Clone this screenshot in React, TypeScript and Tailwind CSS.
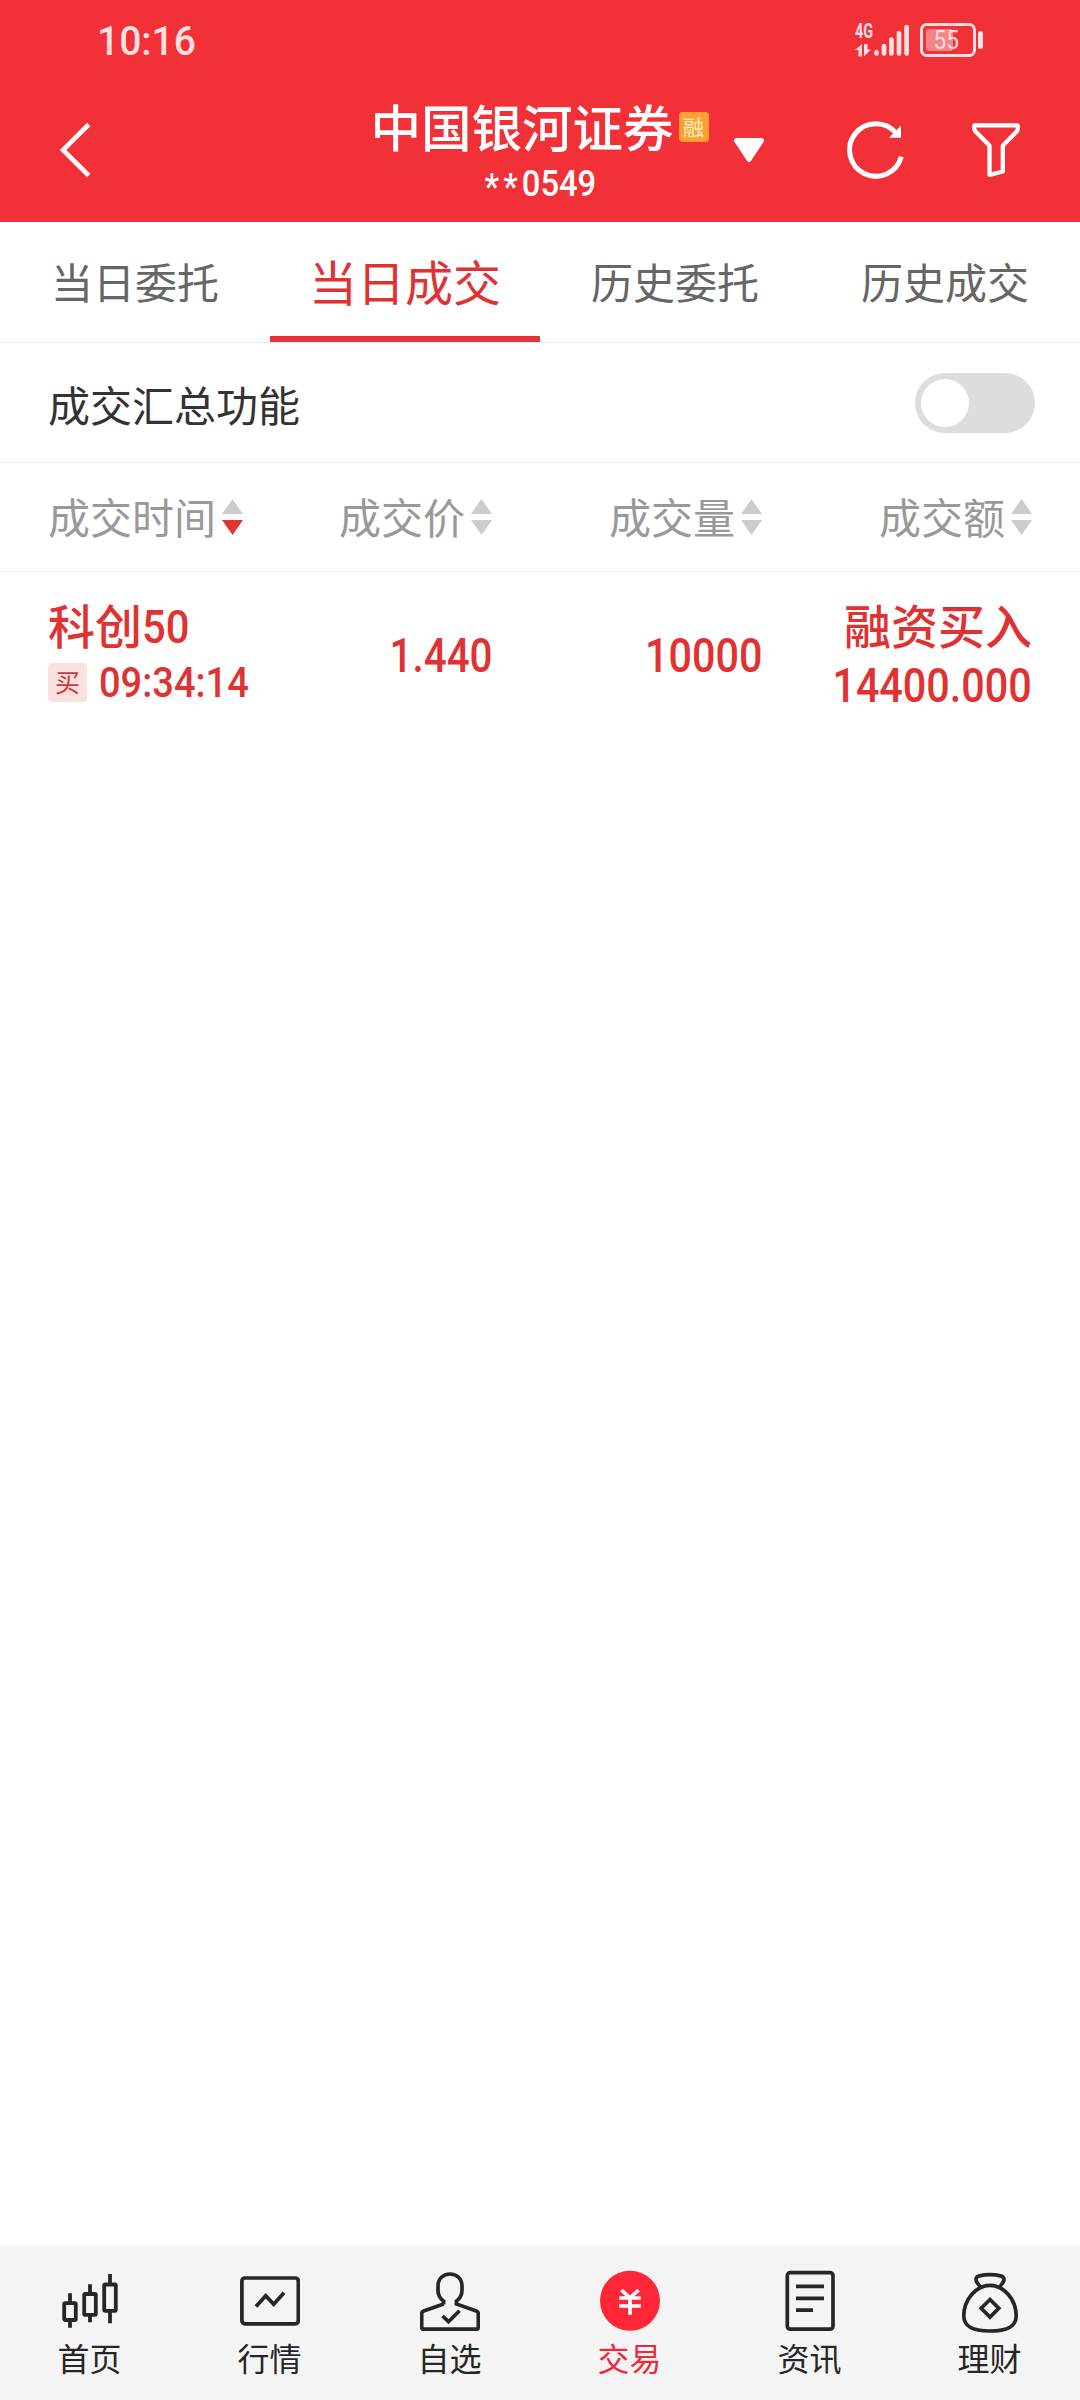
import { useState } from 'react';

const tabs = ['当日委托', '当日成交', '历史委托', '历史成交'];

function StatusBar() {
  return (
    <div className="h-20 flex items-center justify-between pl-[97px] pr-[97px] text-[#ffdfe0]">
      <div className="font-[Roboto] font-medium text-[41px] leading-none origin-left scale-x-[.95] pt-[3px]">10:16</div>
      <div className="flex items-center">
        <div className="flex items-end h-[34px]">
          <div className="w-[19px] h-[34px] flex flex-col">
            <div className="font-[Roboto] font-bold text-[20px] leading-[17px] origin-left scale-x-[.72]">4G</div>
            <svg width="17" height="13" viewBox="0 0 17 13" className="mt-[4px]" fill="currentColor">
              <path d="M7 0v12.500H3.500V6H0z" />
              <path d="M9 0h3.500v5.500H16L9 12.500z" />
            </svg>
          </div>
          <svg width="36" height="34" viewBox="0 0 36 34" stroke="currentColor" strokeWidth="4.700" strokeLinecap="round">
            <path d="M2.500 29.300v1.200M10 23v7.500M17.400 16.500v14M25 10v20.500M32.600 4v26.500" />
          </svg>
        </div>
        <div className="flex items-center ml-[10px]">
          <div className="relative w-[56px] h-[34px] border-[3px] border-[#ffdfe0] rounded-[7px] flex items-center justify-center">
            <div className="absolute left-[3px] top-[3px] w-[27px] h-[22px] rounded-[3px] bg-white/40" />
            <span className="relative font-[Roboto] text-[25px] leading-none origin-center scale-x-[.9] pr-[3px]">55</span>
          </div>
          <div className="w-[5px] h-[18px] rounded-full bg-[#ffdfe0] ml-[2px]" />
        </div>
      </div>
    </div>
  );
}

function Header() {
  return (
    <div className="h-[142px] grid grid-cols-[340px_400px_340px] text-white">
      <svg width="120" height="142" viewBox="0 80 120 142" fill="none" stroke="currentColor" strokeWidth="4.600">
        <path d="M88.700 124.500L63 150l25.700 25.500" />
      </svg>
      <div className="flex flex-col items-center">
        <div className="flex items-center h-[94px] pr-px">
          <div className="text-[50.500px] leading-none font-medium pb-[4px]">中国银河证券</div>
          <div className="w-[30px] h-[30px] ml-[5px] rounded-[4px] bg-[#ffa032] text-[#fff3c4] text-[21px] leading-none flex items-center justify-center">
            <span className="pb-[2px]">融</span>
          </div>
        </div>
        <div className="flex -mt-[8px] font-[Roboto] font-medium text-[36px] leading-none scale-x-[.91]">
          <span className="pt-[3px] tracking-[4.500px]">**</span>
          <span>0549</span>
        </div>
      </div>
      <svg width="340" height="142" viewBox="740 80 340 142" fill="none" stroke="currentColor" className="overflow-visible">
        <path d="M736.500 140.500h25L749 159.500z" fill="currentColor" strokeWidth="5" strokeLinejoin="round" />
        <path d="M901.300 156.700A26.300 26.300 0 1 1 896 133" strokeWidth="5" />
        <path d="M889 137.700h12V125.500z" fill="currentColor" stroke="none" />
        <path
          d="M975 125.300h42a.8.8 0 0 1 .8.8v2.500c0 1.200-.5 2.300-1.300 3.100l-13.700 13.800v26l-13.300 3.400v-29.300l-13.700-13.900c-1-1-1.600-2.200-1.600-3.500v-2.100a.8.8 0 0 1 .8-.8z"
          strokeWidth="4.300"
          strokeLinejoin="round"
        />
      </svg>
    </div>
  );
}

function SortArrows({ down = false }: { down?: boolean }) {
  return (
    <svg width="21" height="36" viewBox="0 0 21 36" className="ml-[6px]">
      <path d="M10.500 0L21 15H0z" fill="#ccc" />
      <path d="M0 21h21L10.500 36z" fill={down ? '#e63232' : '#ccc'} />
    </svg>
  );
}

const navItems = [
  {
    label: '首页',
    icon: (
      <g strokeWidth="3.800">
        <rect x="4.200" y="33.200" width="11.600" height="16.800" rx="1" />
        <rect x="24.200" y="24" width="11.600" height="20.800" rx="1" />
        <rect x="44.200" y="14.500" width="11.600" height="26.300" rx="1" />
        <path d="M10 23.300V33M10 50v7.800M30 14.300V24M30 45v7.300M50 4v10M50 41v12.300" />
      </g>
    ),
  },
  {
    label: '行情',
    icon: (
      <>
        <rect x="1.900" y="8" width="56.400" height="45.800" rx="3" />
        <path d="M16 36.500l9.700-10.800 8 8.600L44 22.700" />
      </>
    ),
  },
  {
    label: '自选',
    icon: (
      <>
        <path d="M23.600 34.500v-3.300C19.700 28.200 18 25 18 20.500V16C18 8.800 23.200 4 30 4s12 4.800 12 12v4.500c0 4.500-1.700 7.700-5.600 10.700v2.700L56.300 41c1.200.5 2 1.500 2 2.700v13c0 1.500-1 2.500-2.500 2.500H4.200c-1.500 0-2.500-1-2.500-2.500v-13c0-1.200.8-2.200 2-2.700l19.900-7.100" />
        <path d="M22.500 46l6 5.700 11-11" />
      </>
    ),
  },
  {
    label: '交易',
    icon: (
      <>
        <circle cx="30" cy="30.700" r="30" fill="#ff2638" stroke="none" />
        <path d="M21.500 20l8.500 8 8.500-8M30 28v16.700M19.200 28h21.600M19.200 36h21.600" stroke="#fff" />
      </>
    ),
  },
  {
    label: '资讯',
    icon: (
      <>
        <rect x="7.300" y="2.700" width="45.700" height="56.500" rx="3" />
        <path d="M16 16.300h28M16 28.300h28M16 40.200h17" />
      </>
    ),
  },
  {
    label: '理财',
    icon: (
      <>
        <path d="M30 15.300c-14 0-26.200 14.500-26.200 30.500C3.800 56.500 12 61 30 61s26.200-4.500 26.200-15.200c0-16-12.200-30.500-26.200-30.500z" />
        <path d="M20.500 17.500c-1.200-2.300-3.300-4.300-4.200-6.500-.8-2.300 0-4.300 2.300-4.900 7-1.700 15.800-1.700 22.800 0 2.300.6 3.100 2.600 2.300 4.900-.9 2.200-3 4.200-4.200 6.500" />
        <path d="M30 29.500l8.800 8.800-8.800 8.800-8.800-8.800z" />
      </>
    ),
  },
];

function App() {
  const [activeTab, setActiveTab] = useState('当日成交');
  const [summary, setSummary] = useState(false);

  return (
    <div className="w-[1080px] h-[2400px] flex flex-col bg-white overflow-hidden font-['Noto_Sans_CJK_SC',sans-serif]">
      <div className="h-[222px] bg-[#f23038]">
        <StatusBar />
        <Header />
      </div>

      <div className="h-[121px] grid grid-cols-4 border-b border-[#eee]">
        {tabs.map((tab) => (
          <button
            key={tab}
            onClick={() => setActiveTab(tab)}
            className={
              tab === activeTab
                ? 'border-b-[6px] border-[#e63232] pt-[2px] text-[48px] leading-none text-[#e03232]'
                : 'text-[42px] leading-none text-[#666] pb-[2px]'
            }
          >
            {tab}
          </button>
        ))}
      </div>

      <div className="h-[120px] flex items-center justify-between pl-12 pr-[45px] border-b border-[#eee]">
        <div className="text-[42px] leading-none text-[#333] pt-[2px]">成交汇总功能</div>
        <button
          onClick={() => setSummary(!summary)}
          className={`w-[120px] h-[60px] px-[6px] rounded-full bg-[#ddd] flex items-center ${summary ? 'justify-end' : ''}`}
        >
          <span className="w-[48px] h-[48px] rounded-full bg-white" />
        </button>
      </div>

      <div className="h-[109px] grid grid-cols-4 items-center border-b border-[#eee] text-[42px] leading-none text-[#999]">
        <div className="flex items-center pl-12">
          <span className="pb-[2px]">成交时间</span>
          <SortArrows down />
        </div>
        <div className="flex items-center justify-end pr-12">
          <span className="pb-[2px]">成交价</span>
          <SortArrows />
        </div>
        <div className="flex items-center justify-end pr-12">
          <span className="pb-[2px]">成交量</span>
          <SortArrows />
        </div>
        <div className="flex items-center justify-end pr-12">
          <span className="pb-[2px]">成交额</span>
          <SortArrows />
        </div>
      </div>

      <div className="h-[168px] grid grid-cols-4 items-center text-[#e03232] font-medium text-[48px] leading-none">
        <div className="pl-12">
          <div className="flex items-center h-[52px]">
            <span className="text-[47px] pb-[4px]">科创</span>
            <span className="font-[Roboto] text-[47px] origin-left scale-x-[.89] pt-[3px]">50</span>
          </div>
          <div className="flex items-center h-[62px]">
            <span className="w-[39px] h-[39px] rounded-[4px] bg-[#fbe0e0] text-[#cc3a3a] text-[25px] font-normal flex items-center justify-center shrink-0">
              <span className="pb-[2px]">买</span>
            </span>
            <span className="font-[Roboto] text-[42.500px] ml-[12px] origin-left scale-x-[.895] pt-[2px]">09:34:14</span>
          </div>
        </div>
        <div className="pr-12 flex justify-end">
          <span className="font-[Roboto] origin-right scale-x-[.84]">1.440</span>
        </div>
        <div className="pr-12 flex justify-end">
          <span className="font-[Roboto] origin-right scale-x-[.86]">10000</span>
        </div>
        <div className="pr-12 flex flex-col items-end">
          <div className="text-[47px] h-[52px] flex items-center pb-[4px]">融资买入</div>
          <div className="h-[62px] flex items-center pt-[7px]">
            <span className="font-[Roboto] origin-right scale-x-[.86]">14400.000</span>
          </div>
        </div>
      </div>

      <div className="flex-1" />

      <div className="h-[154px] grid grid-cols-6 bg-[#f4f4f4] pt-6">
        {navItems.map((item) => (
          <div
            key={item.label}
            className={`flex flex-col items-center ${item.label === '交易' ? 'text-[#ee2a3a]' : 'text-[#262626]'}`}
          >
            <svg width="60" height="64" viewBox="0 0 60 64" fill="none" stroke="currentColor" strokeWidth="3.700">
              {item.icon}
            </svg>
            <div className="text-[32px] leading-none mt-[7px] pr-px">{item.label}</div>
          </div>
        ))}
      </div>
    </div>
  );
}

export default App;
